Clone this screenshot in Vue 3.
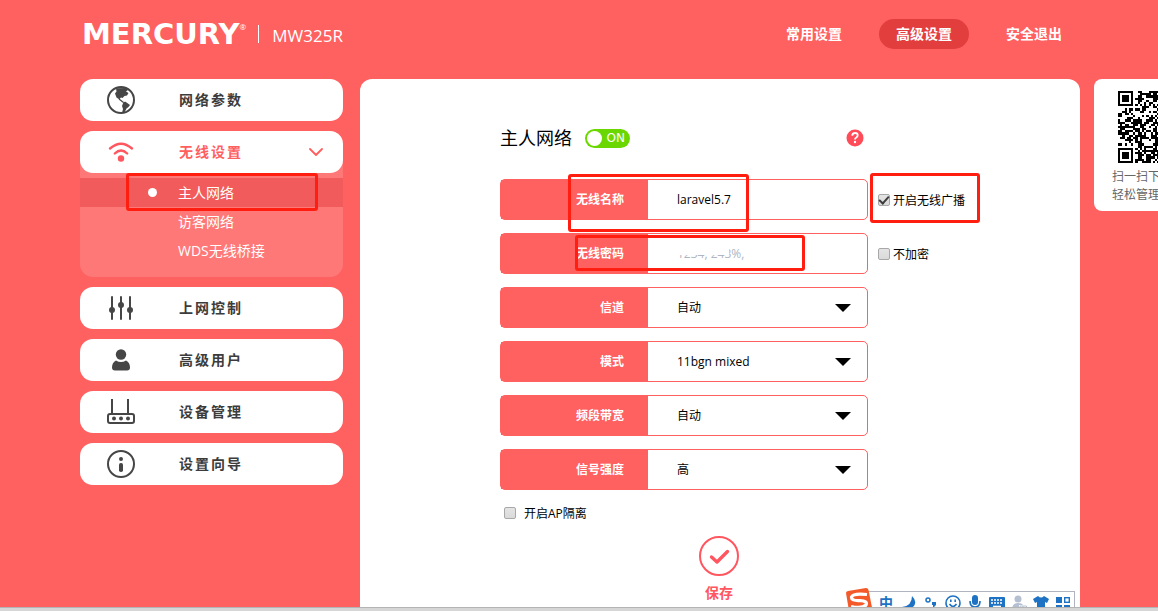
<script setup>
import { ref } from 'vue'

const navItems = ['常用设置', '高级设置', '安全退出']
const activeNav = ref('高级设置')

const subItems = ['主人网络', '访客网络', 'WDS无线桥接']
const activeSub = ref('主人网络')

const menuAfter = [
  { label: '上网控制', icon: 'sliders' },
  { label: '高级用户', icon: 'user' },
  { label: '设备管理', icon: 'router' },
  { label: '设置向导', icon: 'info' },
]

const ssid = ref('laravel5.7')
const password = ref('1234, 243%,')
const broadcast = ref(true)
const noEncrypt = ref(false)
const apIsolation = ref(false)

const selects = ref([
  { id: 'channel', label: '信道', value: '自动', options: ['自动', '1', '6', '11'] },
  { id: 'mode', label: '模式', value: '11bgn mixed', options: ['11bgn mixed', '11bg mixed', '11n only'] },
  { id: 'bandwidth', label: '频段带宽', value: '自动', options: ['自动', '20MHz', '40MHz'] },
  { id: 'power', label: '信号强度', value: '高', options: ['高', '中', '低'] },
])

// 33 x 33 module code: finder patterns, timing lines and data modules
const SIZE = 33
function finder(x, y) {
  const d = Math.max(Math.abs(x - 3), Math.abs(y - 3))
  return d === 3 || d <= 1
}
function buildCode() {
  let path = ''
  let seed = 325
  for (let y = 0; y < SIZE; y++) {
    for (let x = 0; x < SIZE; x++) {
      seed = (seed * 1103515245 + 12345) % 2147483648
      let on = seed / 2147483648 > 0.44
      const left = x < 8
      const right = x > SIZE - 9
      const top = y < 8
      const bottom = y > SIZE - 9
      if (left && top) on = x < 7 && y < 7 && finder(x, y)
      else if (right && top) on = x > SIZE - 8 && y < 7 && finder(x - SIZE + 7, y)
      else if (left && bottom) on = x < 7 && y > SIZE - 8 && finder(x, y - SIZE + 7)
      else if (x === 6 || y === 6) on = (x + y) % 2 === 0
      if (on) path += `M${x} ${y}h1v1h-1z`
    }
  }
  return path
}
const qrPath = buildCode()
</script>

<template>
  <div class="window">
    <div class="screen">
      <header class="header">
        <div class="brand">
          <span class="logo">MERCURY</span><span class="reg">®</span>
          <span class="divider"></span>
          <span class="model">MW325R</span>
        </div>
        <nav class="nav">
          <a v-for="n in navItems" :key="n" href="#" :class="{ active: n === activeNav }" @click.prevent="activeNav = n">{{ n }}</a>
        </nav>
      </header>

      <div class="body">
        <aside class="sidebar">
          <button class="item" type="button">
            <svg class="icon" viewBox="0 0 30 30" width="30" height="30" aria-hidden="true">
              <circle cx="15" cy="15" r="13" fill="none" stroke="#464646" stroke-width="2" />
              <path d="M10 3.200L20 3L22 5L20 6.500L22.500 8L21 10.500L18.500 11L16.500 13L15 12.500L14 13.500L13.500 14.500L10.500 12.500L9 8.500L10.500 6.500Z" fill="#464646" />
              <path d="M13 14L17.500 17.500" stroke="#464646" stroke-width="1.200" />
              <path d="M17.500 17L19.500 16.800L24 20L22.500 22L20.500 23.500L18.500 27.500L16 28L17 24L16 21Z" fill="#464646" />
            </svg>
            <span>网络参数</span>
          </button>

          <div class="group">
            <button class="item open" type="button" aria-expanded="true">
              <svg class="icon" viewBox="0 0 30 30" width="30" height="30" fill="none" stroke="#ff5660" stroke-width="2.400" aria-hidden="true">
                <path d="M4 11.500Q15 1.800 26 11.500M8.800 16.500Q15 10.500 21.200 16.500" stroke-linecap="round" />
                <circle cx="15" cy="21.500" r="3.200" fill="#ff5660" stroke="none" />
              </svg>
              <span>无线设置</span>
              <svg class="chevron" viewBox="0 0 14 8" width="14" height="8" aria-hidden="true">
                <path d="M1 1L7 7L13 1" fill="none" stroke="#ff5f5f" stroke-width="1.800" stroke-linecap="round" stroke-linejoin="round" />
              </svg>
            </button>
            <ul class="submenu">
              <li v-for="s in subItems" :key="s" :class="{ active: s === activeSub }">
                <a href="#" @click.prevent="activeSub = s">{{ s }}</a>
                <i v-if="s === '主人网络'" class="mark mark-menu"></i>
              </li>
            </ul>
          </div>

          <button v-for="m in menuAfter" :key="m.label" class="item" type="button">
            <svg class="icon" viewBox="0 0 30 30" width="30" height="30" aria-hidden="true">
              <g v-if="m.icon === 'sliders'" fill="#464646" stroke="#464646" stroke-width="2" stroke-linecap="round">
                <path d="M6 4V26M15 4V26M24 4V26" />
                <circle cx="6" cy="17" r="2" />
                <circle cx="15" cy="12" r="2" />
                <circle cx="24" cy="17" r="2" />
              </g>
              <g v-else-if="m.icon === 'user'" fill="#464646">
                <circle cx="15" cy="9.500" r="5.200" />
                <path d="M10 15.500Q15 18.500 20 15.500Q24 17.500 24 22.500Q24 25.500 21 25.500H9Q6 25.500 6 22.500Q6 17.500 10 15.500Z" />
              </g>
              <g v-else-if="m.icon === 'router'" fill="none" stroke="#464646" stroke-width="2">
                <path d="M6 2V17M22 2V17" />
                <rect x="2" y="17" width="26" height="9" rx="2" />
                <g fill="#464646" stroke="none">
                  <circle cx="8" cy="21.500" r="2" />
                  <circle cx="15" cy="21.500" r="2" />
                  <circle cx="22" cy="21.500" r="2" />
                </g>
              </g>
              <g v-else>
                <circle cx="15" cy="15" r="13" fill="none" stroke="#464646" stroke-width="2" />
                <circle cx="15" cy="10" r="2" fill="#464646" />
                <rect x="13" y="14" width="4" height="9" rx="1.800" fill="#464646" />
              </g>
            </svg>
            <span>{{ m.label }}</span>
          </button>
        </aside>

        <main class="panel">
          <div class="form">
            <div class="title-row">
              <h1>主人网络</h1>
              <button class="switch" type="button" role="switch" aria-checked="true" aria-label="主人网络"><i class="knob"></i>ON</button>
              <button class="help" type="button" aria-label="帮助">
                <svg viewBox="0 0 18 18" width="18" height="18" aria-hidden="true">
                  <circle cx="9" cy="9" r="8.500" fill="#ff4c58" />
                  <path d="M6.300 6.700Q6.300 4 9 4Q11.700 4 11.700 6.300Q11.700 7.700 10.300 8.500Q9 9.200 9 10.500" fill="none" stroke="#fff" stroke-width="1.800" />
                  <circle cx="9" cy="13" r="1.200" fill="#fff" />
                </svg>
              </button>
            </div>

            <div class="line">
              <div class="field">
                <label for="ssid">无线名称</label>
                <input id="ssid" v-model="ssid" type="text" />
              </div>
              <div class="check">
                <input id="broadcast" v-model="broadcast" type="checkbox" />
                <label for="broadcast">开启无线广播</label>
                <i class="mark mark-check"></i>
              </div>
              <i class="mark mark-name"></i>
            </div>

            <div class="line">
              <div class="field">
                <label for="pwd">无线密码</label>
                <input id="pwd" v-model="password" class="faded" type="text" />
                <i class="smudge"></i>
              </div>
              <div class="check">
                <input id="noenc" v-model="noEncrypt" type="checkbox" />
                <label for="noenc">不加密</label>
              </div>
              <i class="mark mark-pwd"></i>
            </div>

            <div v-for="s in selects" :key="s.id" class="line">
              <div class="field">
                <label :for="s.id">{{ s.label }}</label>
                <select :id="s.id" v-model="s.value">
                  <option v-for="o in s.options" :key="o">{{ o }}</option>
                </select>
                <svg class="arrow" viewBox="0 0 16 8" width="16" height="8" aria-hidden="true"><path d="M0 0H16L8 8Z" /></svg>
              </div>
            </div>

            <div class="check isolation">
              <input id="ap" v-model="apIsolation" type="checkbox" />
              <label for="ap">开启AP隔离</label>
            </div>
          </div>

          <button class="save" type="button">
            <svg viewBox="0 0 40 40" width="40" height="40" fill="none" stroke="#ff5660" aria-hidden="true">
              <circle cx="20" cy="20" r="19" stroke-width="2" />
              <path d="M12.500 21L18 26L28.500 15.500" stroke-width="3.400" stroke-linecap="round" stroke-linejoin="round" />
            </svg>
            <span>保存</span>
          </button>
        </main>

        <aside class="qr">
          <svg :viewBox="`0 0 ${SIZE} ${SIZE}`" width="72" height="72" shape-rendering="crispEdges" role="img" aria-label="二维码"><path :d="qrPath" /></svg>
          <p>扫一扫下<br />轻松管理</p>
        </aside>
      </div>

      <div class="ime">
        <svg class="ime-logo" viewBox="0 0 28 28" width="28" height="28" aria-hidden="true">
          <path d="M1 5Q1 3.500 3 3L21 0Q23 0 23.500 2L27.500 22Q27.500 24 25.500 24.500L7 28Q5 28 4.500 26Z" fill="#f4592a" />
          <path d="M22 6.500Q8 5 6.500 9Q6 13 15 12.500Q23 13 21 17Q17 21 6 18.500" fill="none" stroke="#fff" stroke-width="3.200" />
        </svg>
        <span class="ime-text">中</span>
        <svg viewBox="0 0 16 16" width="16" height="16"><path d="M11 1Q17 7 12 12Q7 16 1 12Q11 11 11 1Z" /></svg>
        <svg viewBox="0 0 16 16" width="16" height="16"><circle cx="5" cy="5" r="2" fill="none" stroke="#1d72c4" stroke-width="1.500" /><path d="M9 7H13V10L10 13V10H9Z" /></svg>
        <svg viewBox="0 0 16 16" width="16" height="16" fill="none" stroke="#1d72c4" stroke-width="1.600"><circle cx="8" cy="8" r="7" /><path d="M4.500 9Q8 14 11.500 9M5.800 4.500V7M10.200 4.500V7" /></svg>
        <svg viewBox="0 0 16 16" width="16" height="16"><rect x="5" y="0" width="6" height="10" rx="3" /><path d="M3 6Q3 12 8 12Q13 12 13 6M8 12V16" fill="none" stroke="#1d72c4" stroke-width="1.600" /></svg>
        <svg viewBox="0 0 16 16" width="16" height="16"><rect x="0" y="2" width="16" height="12" rx="1" /><path d="M2 5H14M2 8H14" stroke="#fff" stroke-width="1.600" stroke-dasharray="2 1" /><path d="M4 11.500H12" stroke="#fff" stroke-width="1.600" /></svg>
        <svg viewBox="0 0 16 16" width="16" height="16" class="dim"><circle cx="7" cy="4" r="3.500" /><path d="M1 15Q1 8 7 8Q11 8 12 10H8V15Z" /><path d="M9 11H15.500V15H9ZM12 11V15" fill="none" stroke="#b4bfd2" /></svg>
        <svg viewBox="0 0 16 16" width="16" height="16"><path d="M5 1Q8 4 11 1L16 4L14 8L12 7V15H4V7L2 8L0 4Z" /></svg>
        <svg viewBox="0 0 16 16" width="16" height="16"><path d="M1 2H7V8H1ZM1 10H7V16H1ZM9 10H15V16H9Z" /><rect x="9.700" y="2.700" width="4.600" height="4.600" fill="none" stroke="#1d72c4" stroke-width="1.400" /></svg>
      </div>
    </div>
    <div class="edge"></div>
  </div>
</template>

<style>
body {
  margin: 0;
}
</style>

<style scoped>
* {
  box-sizing: border-box;
}
.window {
  display: flex;
  flex-direction: column;
  height: 100vh;
  font-family: "Open Sans", "Noto Sans CJK SC", sans-serif;
  font-size: 12px;
  color: #000;
}
button,
input,
select {
  margin: 0;
  padding: 0;
  border: 0;
  background: none;
  font: inherit;
  color: inherit;
}
a {
  color: #fff;
  text-decoration: none;
}
.screen {
  position: relative;
  flex: 1;
  min-height: 0;
  display: flex;
  flex-direction: column;
  overflow: hidden;
  background: #ff6060;
}
.edge {
  height: 4px;
  border-top: 1px solid #b4b4b4;
  background: #d6d6d6;
}
.header {
  flex: none;
  display: flex;
  align-items: flex-start;
  justify-content: space-between;
  height: 79px;
  padding: 19px 79px 0 82px;
  color: #fff;
}
.brand {
  display: flex;
  align-items: center;
  height: 30px;
}
.logo {
  font: bold 29px/32px "DejaVu Sans", sans-serif;
}
.reg {
  align-self: flex-start;
  font-size: 8px;
  line-height: 16px;
}
.divider {
  width: 1px;
  height: 18px;
  margin: 0 13px 0 12px;
  background: #fff;
}
.model {
  font-size: 17px;
  line-height: 30px;
  padding-top: 3px;
}
.nav {
  display: flex;
  gap: 20px;
}
.nav a {
  padding: 0 17px;
  border-radius: 15px;
  font-size: 14px;
  font-weight: bold;
  line-height: 30px;
}
.nav a.active {
  background: #e33e3e;
}
.body {
  flex: 1;
  display: flex;
  align-items: flex-start;
  min-height: 0;
  padding-left: 80px;
}
.sidebar {
  flex: none;
  display: flex;
  flex-direction: column;
  gap: 10px;
  width: 263px;
  margin-right: 17px;
}
.item {
  display: flex;
  align-items: center;
  width: 100%;
  height: 42px;
  padding: 0 20px 0 26px;
  border-radius: 13px;
  background: #fff;
  color: #3c3c3c;
  font-size: 14px;
  font-weight: bold;
  letter-spacing: 2px;
}
.item span {
  padding-bottom: 2px;
}
.icon {
  flex: none;
  margin-right: 43px;
}
.item.open {
  color: #ff5f5f;
}
.chevron {
  margin-left: auto;
}
.group {
  border-radius: 13px;
  background: #ff7878;
}
.submenu {
  margin: 0;
  padding: 5px 0 12px;
  list-style: none;
}
.submenu li {
  position: relative;
  padding-left: 98px;
  font-size: 14px;
  line-height: 29px;
}
.submenu a {
  display: block;
}
.submenu .active {
  background: #f15b5b;
}
.submenu .active::before {
  content: "";
  position: absolute;
  left: 68px;
  top: 10px;
  width: 9px;
  height: 9px;
  border-radius: 50%;
  background: #fff;
}
.mark {
  position: absolute;
  border: 3px solid #ff1e10;
  border-radius: 3px;
  pointer-events: none;
}
.mark-menu {
  left: 46px;
  right: 25px;
  top: -5px;
  bottom: -4px;
}
.mark-name {
  left: 68px;
  top: -5px;
  width: 181px;
  height: 58px;
}
.mark-pwd {
  left: 75px;
  top: 2px;
  width: 230px;
  height: 36px;
}
.mark-check {
  left: -8px;
  right: -15px;
  top: -6px;
  height: 50px;
}
.panel {
  flex: 1;
  align-self: stretch;
  display: flex;
  flex-direction: column;
  align-items: center;
  min-width: 0;
  padding-top: 48px;
  border-radius: 12px 12px 0 0;
  background: #fff;
}
.form {
  align-self: stretch;
  display: flex;
  flex-direction: column;
  gap: 13px;
  padding-left: 140px;
}
.title-row {
  display: flex;
  align-items: center;
  width: 368px;
  height: 22px;
  margin-bottom: 17px;
}
h1 {
  margin: 0 13px 0 0;
  font-size: 18px;
  font-weight: normal;
  line-height: 22px;
}
.switch {
  display: flex;
  align-items: center;
  justify-content: space-between;
  width: 45px;
  height: 19px;
  padding: 0 5px 0 2px;
  border-radius: 10px;
  background: #6ad800;
  color: #fff;
  font: 12px/19px "DejaVu Sans", sans-serif;
}
.knob {
  width: 15px;
  height: 15px;
  border-radius: 50%;
  background: #fff;
}
.help {
  margin-left: auto;
  margin-right: 4px;
  height: 18px;
}
.help svg,
.qr svg,
.save svg {
  display: block;
}
.line {
  position: relative;
  display: flex;
  height: 41px;
}
.field {
  position: relative;
  display: flex;
  width: 368px;
  border: 1px solid #ff6060;
  border-radius: 5px;
}
.field label {
  flex: none;
  width: 147px;
  padding-right: 24px;
  background: #ff6060;
  color: #fff;
  font-weight: bold;
  line-height: 39px;
  text-align: right;
}
.field input,
.field select {
  flex: 1;
  min-width: 0;
  appearance: none;
  padding-left: 29px;
  outline: none;
}
.field input.faded {
  color: #aeb6c2;
}
.smudge {
  position: absolute;
  left: 174px;
  top: 10px;
  width: 54px;
  height: 11px;
  background: #fff;
  pointer-events: none;
}
.arrow {
  position: absolute;
  right: 16px;
  top: 16px;
  pointer-events: none;
}
.check {
  position: relative;
  display: flex;
  align-items: center;
  margin-left: 10px;
}
.check input {
  appearance: none;
  display: grid;
  place-items: center;
  width: 12px;
  height: 12px;
  margin-right: 3px;
  border: 1px solid #a8a8a8;
  border-radius: 2px;
  background: linear-gradient(#e4e4e4, #dadada);
}
.check input:checked::after {
  content: "";
  width: 8px;
  height: 4px;
  margin-bottom: 2px;
  border: solid #3c3c3c;
  border-width: 0 0 2px 2px;
  rotate: -48deg;
}
.isolation {
  height: 20px;
  margin-left: 4px;
}
.isolation input {
  margin-right: 8px;
}
.save {
  display: flex;
  flex-direction: column;
  align-items: center;
  gap: 7px;
  margin: 13px 2px 0 0;
  color: #ff5660;
  font-size: 14px;
  font-weight: bold;
  line-height: 20px;
}
.qr {
  flex: none;
  width: 110px;
  margin: 0 -46px 0 14px;
  padding: 12px 0 7px 18px;
  border-radius: 8px;
  background: #fff;
  color: #666;
}
.qr svg {
  margin-left: 6px;
}
.qr p {
  margin: 5px 0 0;
  line-height: 18px;
}
.ime {
  position: absolute;
  right: 83px;
  bottom: -8px;
  display: flex;
  align-items: center;
  gap: 6px;
  height: 24px;
  padding: 0 3px 0 0;
  border: 1px solid #b0b4c0;
  background: #fff;
  fill: #1d72c4;
}
.ime-logo {
  margin: -2px 0 0 -12px;
}
.ime-text {
  width: 16px;
  color: #1d72c4;
  font-size: 14px;
  font-weight: bold;
  line-height: 22px;
}
.ime .dim {
  fill: #b4bfd2;
}
</style>
